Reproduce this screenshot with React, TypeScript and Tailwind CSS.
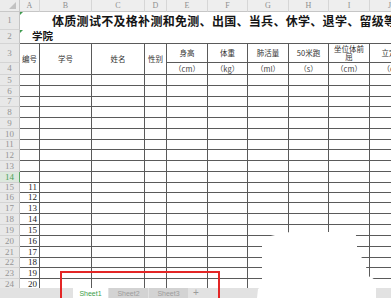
import React from "react";

const letters = ["A", "B", "C", "D", "E", "F", "G", "H", "I", "J"];
const cjk = { fontFamily: '"Noto Sans CJK SC", "Noto Sans", sans-serif' };
const serif = { fontFamily: '"Liberation Serif", "DejaVu Serif", serif' };

const measures = [
  { name: "身高", unit: "（cm）" },
  { name: "体重", unit: "（kg）" },
  { name: "肺活量", unit: "（ml）" },
  { name: "50米跑", unit: "（s）" },
  { name: "坐位体前屈", unit: "（cm）" },
  { name: "立定跳远", unit: "（cm）" },
];

const dataRows = Array.from({ length: 20 }, (_, i) => i + 5);

function RowHead({ n }: { n: number }) {
  const active = n === 14;
  return (
    <div
      className={
        "flex items-center justify-center border-r border-b text-[9px] leading-none " +
        (active
          ? "bg-[#dce8dd] text-[#4a9f58] border-r-[#5aa866] border-b-[#d0d0d0]"
          : "bg-[#e8e8e8] text-[#959595] border-r-[#c4c4c4] border-b-[#d4d4d4]")
      }
      style={serif}
    >
      {n}
    </div>
  );
}

export default function App() {
  return (
    <div className="relative w-[391px] h-[298px] overflow-hidden bg-white flex flex-col">
      <div className="h-[288px] overflow-hidden">
        <div className="grid w-[410px] grid-cols-[20px_20px_52px_53px_22px_41px_40px_41px_40px_41px_40px] grid-rows-[12px_18px_14px_19px_12px_11px_11px_10px_11px_11px_11px_10px_11px_11px_11px_10px_10px_11px_11px_11px_11px_11px_10px_11px_11px]">
          {/* column letters */}
          <div className="relative bg-[#ececec] border-r border-b border-[#c8c8c8]">
            <div className="absolute right-[3px] bottom-[2px] w-0 h-0 border-l-[7px] border-l-transparent border-b-[7px] border-b-[#c2c2c2]" />
          </div>
          {letters.map((l) => (
            <div
              key={l}
              className="flex items-center justify-center bg-[#eeeeee] border-r border-b border-r-[#d6d6d6] border-b-[#c6c6c6] text-[8px] text-[#8e8e8e] leading-none"
              style={serif}
            >
              {l}
            </div>
          ))}

          {/* row 1 title */}
          <RowHead n={1} />
          <div className="relative col-span-10 flex items-center pl-[32px] whitespace-nowrap overflow-hidden">
            <div className="absolute left-0 top-0 w-0 h-0 border-r-[3px] border-r-transparent border-t-[3px] border-t-[#3f9b4f]" />
            <span className="text-[12px] font-bold tracking-[0.3px] text-[#151515]" style={cjk}>
              体质测试不及格补测和免测、出国、当兵、休学、退学、留级等
            </span>
          </div>

          {/* row 2 */}
          <RowHead n={2} />
          <div className="relative col-span-3 flex items-center pl-[12px] border-b border-[#5a5a5a]">
            <div className="absolute left-0 top-0 w-0 h-0 border-r-[3px] border-r-transparent border-t-[3px] border-t-[#3f9b4f]" />
            <span className="text-[10.5px] leading-none font-bold text-[#151515]" style={cjk}>
              学院
            </span>
          </div>
          {letters.slice(3).map((l) => (
            <div key={l} className="border-b border-[#5a5a5a]" />
          ))}

          {/* rows 3-4 header */}
          <RowHead n={3} />
          {["编号", "学号", "姓名", "性别"].map((t) => (
            <div
              key={t}
              className="row-span-2 flex items-center justify-center border-r border-b border-[#5a5a5a] text-[7.5px] text-[#333]"
              style={cjk}
            >
              {t}
            </div>
          ))}
          {measures.map((m) => (
            <div
              key={m.name}
              className="flex items-center justify-center text-center border-r border-b border-[#5a5a5a] text-[7.5px] leading-[8px] text-[#333] whitespace-nowrap overflow-hidden"
              style={cjk}
            >
              {m.name === "坐位体前屈" ? (
                <span>
                  坐位体前
                  <br />屈
                </span>
              ) : m.name === "立定跳远" ? (
                <span className="pl-[14px]">{m.name}</span>
              ) : (
                m.name
              )}
            </div>
          ))}
          <RowHead n={4} />
          {measures.map((m) => (
            <div
              key={m.unit + m.name}
              className="flex items-center justify-center border-r border-b border-[#5a5a5a] text-[7.5px] text-[#444] whitespace-nowrap overflow-hidden"
              style={cjk}
            >
              {m.name === "立定跳远" ? <span className="pl-[12px]">{m.unit}</span> : m.unit}
            </div>
          ))}

          {/* data rows */}
          {dataRows.map((r) => (
            <React.Fragment key={r}>
              <RowHead n={r} />
              {letters.map((l) => (
                <div
                  key={l}
                  className="flex items-center justify-end pr-[2px] border-r border-b border-[#5a5a5a] text-[9px] leading-none text-[#222]"
                  style={serif}
                >
                  {l === "A" && r >= 15 ? r - 4 : null}
                </div>
              ))}
            </React.Fragment>
          ))}
        </div>
      </div>

      {/* sheet tabs */}
      <div className="flex h-[10px] bg-[#e2e2e2] items-stretch text-[7px] leading-none" style={{ fontFamily: '"Liberation Sans", Arial, sans-serif' }}>
        <div className="w-[73px]" />
        <div className="w-[35px] bg-white text-[#3aa04a] flex items-center justify-center">Sheet1</div>
        <div className="w-[39px] ml-px bg-[#d3d3d3] text-[#9c9c9c] flex items-center justify-center">Sheet2</div>
        <div className="w-[39px] ml-px bg-[#d3d3d3] text-[#9c9c9c] flex items-center justify-center">Sheet3</div>
        <div className="w-[16px] flex items-center justify-center text-[10px] text-[#9a9a9a]">+</div>
      </div>

      {/* highlight box */}
      <div className="absolute left-[60px] top-[271px] w-[160px] h-[40px] border-2 border-[#e32626]" />

      {/* redaction blob */}
      <svg className="absolute left-0 top-0" width="391" height="298" viewBox="0 0 391 298">
        <path
          d="M290 232 L352 232 Q357 233 357 241 L357 256 Q366 257 366 266 L367 276 Q376 277 376 286 L376 298 L257 298 L258 289 Q262 287 262 280 L262 244 Q263 237 275 235 Z"
          fill="#ffffff"
        />
      </svg>
    </div>
  );
}
